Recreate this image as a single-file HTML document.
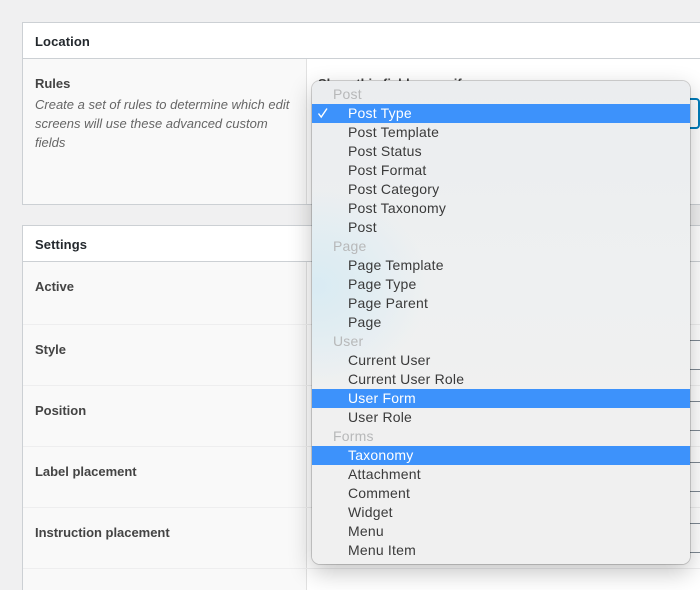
<!DOCTYPE html>
<html><head><meta charset="utf-8"><style>
html,body{margin:0;padding:0;width:700px;height:590px;overflow:hidden;background:#f0f0f1;}
body{position:relative;font-family:"Liberation Sans",sans-serif;font-size:13px;color:#444;filter:blur(.25px);}
.a{position:absolute;box-sizing:border-box;}
.h{left:35px;font-size:13px;font-weight:bold;line-height:18px;color:#23282d;letter-spacing:.1px;}
.l{left:35px;font-size:13px;font-weight:bold;line-height:18px;color:#444;letter-spacing:-.02px;}
.sep{left:23px;width:677px;height:1px;background:#eeeeef;}
.sel{left:680px;width:30px;height:30px;border:1px solid #7e8993;border-radius:3px;background:#fff;}
#m{left:312px;top:81px;width:378px;height:483px;border-radius:8px;background:radial-gradient(ellipse 110px 100px at 5px 205px,#d9ebf3 0%,#e1edf2 45%,rgba(240,240,241,0) 100%),linear-gradient(#ebedef 0,#eef0f1 200px,#f0f0f0 330px);box-shadow:0 0 0 1px rgba(0,0,0,.17),0 8px 24px rgba(0,0,0,.24);overflow:hidden;}
.r{position:absolute;left:0;width:378px;height:19px;line-height:19px;font-size:14px;color:#3a3a3a;padding-left:36px;box-sizing:border-box;letter-spacing:.2px;white-space:nowrap;}
.g{padding-left:21px;color:#b7b8b9;}
.s{background:#3d92fb;color:#fff;}
</style></head><body>
<div class="a" style="left:22px;top:22px;width:700px;height:183px;background:#fff;border:1px solid #ccd0d4;"></div>
<div class="a" style="left:23px;top:58px;width:677px;height:1px;background:#ccd0d4;"></div>
<div class="a" style="left:23px;top:59px;width:283px;height:145px;background:#f9f9f9;border-right:0;"></div>
<div class="a" style="left:306px;top:59px;width:1px;height:145px;background:#e1e1e1;"></div>
<div class="a h" style="top:33px;">Location</div>
<div class="a l" style="top:75px;">Rules</div>
<div class="a" style="left:35px;top:95px;width:262px;font-style:italic;font-size:13px;line-height:19px;color:#666;">Create a set of rules to determine which edit screens will use these advanced custom fields</div>
<div class="a" style="left:318px;top:75px;font-size:13px;font-weight:bold;line-height:18px;color:#444;white-space:nowrap;">Show this field group if</div>
<div class="a" style="left:670px;top:98px;width:30px;height:31px;background:#fff;border:2px solid #007cba;border-radius:4px;"></div>

<div class="a" style="left:22px;top:225px;width:700px;height:380px;background:#fff;border:1px solid #ccd0d4;"></div>
<div class="a" style="left:23px;top:261px;width:677px;height:1px;background:#ccd0d4;"></div>
<div class="a" style="left:23px;top:262px;width:283px;height:328px;background:#f9f9f9;"></div>
<div class="a" style="left:306px;top:262px;width:1px;height:328px;background:#e1e1e1;"></div>
<div class="a h" style="top:236px;">Settings</div>
<div class="a l" style="top:278px;">Active</div>
<div class="a sep" style="top:324px;"></div>
<div class="a l" style="top:341px;">Style</div>
<div class="a sep" style="top:385px;"></div>
<div class="a l" style="top:402px;">Position</div>
<div class="a sep" style="top:446px;"></div>
<div class="a l" style="top:463px;">Label placement</div>
<div class="a sep" style="top:507px;"></div>
<div class="a l" style="top:524px;">Instruction placement</div>
<div class="a sep" style="top:568px;"></div>
<div class="a sel" style="top:340px;"></div>
<div class="a sel" style="top:401px;"></div>
<div class="a sel" style="top:462px;"></div>
<div class="a sel" style="top:523px;"></div>

<div class="a" id="m">
<div class="r g" style="top:4px;">Post</div>
<div class="r s" style="top:23px;">Post Type<svg style="position:absolute;left:5px;top:3px;" width="12" height="12" viewBox="0 0 12 12"><path d="M1.5 6.5L4.2 10L10 1.5" fill="none" stroke="#fff" stroke-width="1.4"/></svg></div>
<div class="r" style="top:42px;">Post Template</div>
<div class="r" style="top:61px;">Post Status</div>
<div class="r" style="top:80px;">Post Format</div>
<div class="r" style="top:99px;">Post Category</div>
<div class="r" style="top:118px;">Post Taxonomy</div>
<div class="r" style="top:137px;">Post</div>
<div class="r g" style="top:156px;">Page</div>
<div class="r" style="top:175px;">Page Template</div>
<div class="r" style="top:194px;">Page Type</div>
<div class="r" style="top:213px;">Page Parent</div>
<div class="r" style="top:232px;">Page</div>
<div class="r g" style="top:251px;">User</div>
<div class="r" style="top:270px;">Current User</div>
<div class="r" style="top:289px;">Current User Role</div>
<div class="r s" style="top:308px;">User Form</div>
<div class="r" style="top:327px;">User Role</div>
<div class="r g" style="top:346px;">Forms</div>
<div class="r s" style="top:365px;">Taxonomy</div>
<div class="r" style="top:384px;">Attachment</div>
<div class="r" style="top:403px;">Comment</div>
<div class="r" style="top:422px;">Widget</div>
<div class="r" style="top:441px;">Menu</div>
<div class="r" style="top:460px;">Menu Item</div>
</div>
</body></html>
